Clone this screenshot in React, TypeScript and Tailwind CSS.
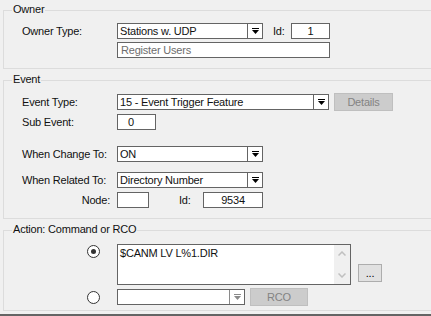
import React from "react";

const Arrow = ({ disabled }: { disabled?: boolean }) => (
  <svg width="7" height="6" viewBox="0 0 7 6">
    <rect x="0" y="0" width="7" height="1" fill={disabled ? "#8a8a8a" : "#000"} />
    <polygon points="0,2 7,2 3.5,6" fill={disabled ? "#8a8a8a" : "#000"} />
  </svg>
);

const Combo = ({ value, w, disabled }: { value: string; w: string; disabled?: boolean }) => (
  <div className={`${w} h-[16px] flex border border-[#646464] bg-white`}>
    <div className="flex-1 pl-[2px] leading-[14px] whitespace-nowrap overflow-hidden">{value}</div>
    <div className={`w-[15px] h-full flex items-center justify-center border-l ${disabled ? "border-[#8a8a8a]" : "border-[#646464]"}`}>
      <Arrow disabled={disabled} />
    </div>
  </div>
);

const Box = ({ value, w, className = "" }: { value?: string; w: string; className?: string }) => (
  <div className={`${w} h-[16px] border border-[#646464] bg-white leading-[14px] whitespace-nowrap ${className}`}>{value}</div>
);

const Btn = ({ label, w, disabled }: { label: string; w: string; disabled?: boolean }) => (
  <div
    className={`${w} h-[18px] flex items-center justify-center border ${
      disabled ? "bg-[#cccccc] border-[#bfbfbf] text-[#838383]" : "bg-[#e1e1e1] border-[#adadad] text-black"
    }`}
  >
    {label}
  </div>
);

const Radio = ({ checked }: { checked?: boolean }) => (
  <div className="w-[13px] h-[13px] rounded-full border border-[#333333] bg-white flex items-center justify-center">
    {checked && <div className="w-[5px] h-[5px] rounded-full bg-[#333333]" />}
  </div>
);

const Group = ({ title, className, children }: { title: string; className: string; children: React.ReactNode }) => (
  <div className={`relative ml-[3px] w-[440px] border border-[#dcdcdc] ${className}`}>
    <span className="absolute left-[8px] top-[-8px] px-[1px] bg-[#f0f0f0] leading-[13px]">{title}</span>
    {children}
  </div>
);

const Label = ({ text, w = "w-[95px]", className = "" }: { text: string; w?: string; className?: string }) => (
  <div className={`${w} shrink-0 whitespace-nowrap ${className}`}>{text}</div>
);

export default function App() {
  return (
    <div className="w-[431px] h-[316px] overflow-hidden bg-[#f0f0f0] text-[11px] tracking-[-0.2px] text-[#111111] font-['Liberation_Sans',Arial,sans-serif] flex flex-col">
      <Group title="Owner" className="mt-[10px] pt-[12px] pb-[10px] pl-[18px]">
        <div className="flex items-center h-[16px]">
          <Label text="Owner Type:" />
          <Combo value="Stations w. UDP" w="w-[146px]" />
          <Label text="Id:" w="w-[18px]" className="ml-[10px]" />
          <Box value="1" w="w-[39px]" className="text-center" />
        </div>
        <div className="flex mt-[3px] pl-[95px]">
          <Box value="Register Users" w="w-[213px]" className="pl-[3px] text-[#6d6d6d]" />
        </div>
      </Group>

      <Group title="Event" className="mt-[11px] pt-[12px] pb-[10px] pl-[18px]">
        <div className="flex items-center h-[18px]">
          <Label text="Event Type:" />
          <Combo value="15 - Event Trigger Feature" w="w-[212px]" />
          <div className="ml-[5px]">
            <Btn label="Details" w="w-[59px]" disabled />
          </div>
        </div>
        <div className="flex items-center h-[16px] mt-[3px]">
          <Label text="Sub Event:" />
          <Box value="0" w="w-[39px]" className="pl-[10px]" />
        </div>
        <div className="flex items-center h-[16px] mt-[16px]">
          <Label text="When Change To:" />
          <Combo value="ON" w="w-[146px]" />
        </div>
        <div className="flex items-center h-[16px] mt-[10px]">
          <Label text="When Related To:" />
          <Combo value="Directory Number" w="w-[146px]" />
        </div>
        <div className="flex items-center h-[16px] mt-[4px]">
          <Label text="Node:" className="text-right pr-[7px]" />
          <Box w="w-[32px]" />
          <Label text="Id:" w="w-[24px]" className="ml-[30px]" />
          <Box value="9534" w="w-[60px]" className="text-center" />
        </div>
      </Group>

      <Group title="Action: Command or RCO" className="mt-[11px] pt-[13px] pb-[4px] pl-[83px]">
        <div className="flex items-start">
          <div className="mt-[1px]">
            <Radio checked />
          </div>
          <div className="ml-[17px] w-[234px] h-[41px] border border-[#646464] bg-white flex">
            <div className="flex-1 pl-[2px] pt-[2px] leading-[13px]">$CANM LV L%1.DIR</div>
            <div className="w-[16px] h-full bg-[#f0f0f0] flex flex-col items-center justify-between py-[6px]">
              <svg width="8" height="5" viewBox="0 0 8 5">
                <polyline points="0.5,4.5 4,1 7.5,4.5" fill="none" stroke="#c0c0c0" strokeWidth="1.5" />
              </svg>
              <svg width="8" height="5" viewBox="0 0 8 5">
                <polyline points="0.5,0.5 4,4 7.5,0.5" fill="none" stroke="#c0c0c0" strokeWidth="1.5" />
              </svg>
            </div>
          </div>
          <div className="ml-[7px] mt-[20px]">
            <Btn label="..." w="w-[24px]" />
          </div>
        </div>
        <div className="flex items-center h-[18px] mt-[3px]">
          <Radio />
          <div className="ml-[17px]">
            <Combo value="" w="w-[128px]" disabled />
          </div>
          <div className="ml-[5px]">
            <Btn label="RCO" w="w-[58px]" disabled />
          </div>
        </div>
      </Group>
      <div className="mt-[3px] h-[2px] bg-[#646464]" />
    </div>
  );
}
